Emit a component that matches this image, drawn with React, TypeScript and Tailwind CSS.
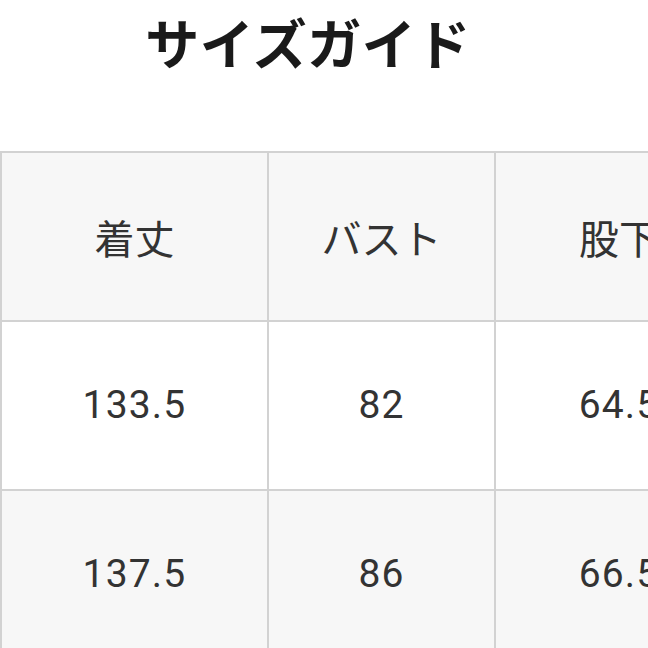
const headers = ['着丈', 'バスト', '股下']
const rows = [
  ['133.5', '82', '64.5'],
  ['137.5', '86', '66.5'],
]

const colWidths = ['w-[267px]', 'w-[227px]', 'w-[248px]']

function Row({ cells, shaded, numeric }: { cells: string[]; shaded: boolean; numeric: boolean }) {
  return (
    <div className={`flex ${shaded ? 'bg-[#f7f7f7]' : 'bg-white'}`}>
      {cells.map((c, i) => (
        <div
          key={i}
          className={`${colWidths[i]} shrink-0 h-[169px] border-r-2 border-b-2 border-[#d2d2d2] flex items-center justify-center text-[#333333] ${
            numeric
              ? "text-[39px] tracking-[0.03em] [font-family:Roboto,'Noto_Sans',sans-serif]"
              : "text-[40px] [font-family:'Noto_Sans_CJK_JP',sans-serif]"
          }`}
        >
          {c}
        </div>
      ))}
    </div>
  )
}

export default function App() {
  return (
    <div className="w-[648px] h-[648px] overflow-hidden bg-white">
      <div className="w-[616px] pt-[8px] h-[151px] text-center">
        <h1 className="text-[54px] leading-[68px] tracking-[0.01em] font-bold text-[#1a1a1a] [font-family:'Noto_Sans_CJK_JP',sans-serif]">
          サイズガイド
        </h1>
      </div>
      <div className="w-[800px] border-t-2 border-l-2 border-[#d2d2d2]">
        <Row cells={headers} shaded numeric={false} />
        {rows.map((r, i) => (
          <Row key={i} cells={r} shaded={i % 2 === 1} numeric />
        ))}
      </div>
    </div>
  )
}
